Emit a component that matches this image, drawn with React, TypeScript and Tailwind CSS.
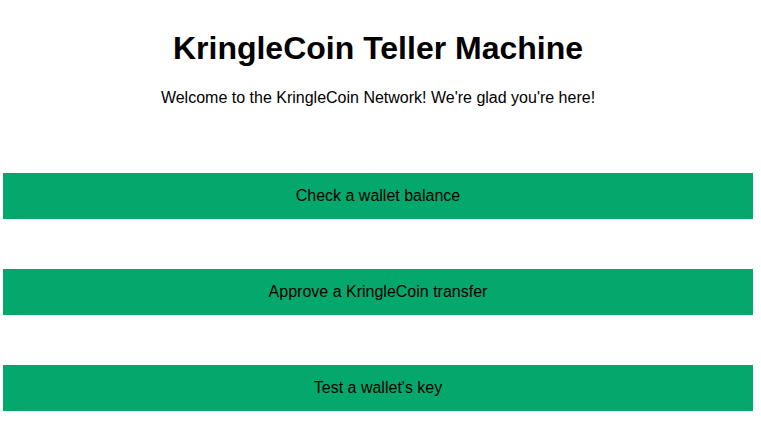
const actions = [
  "Check a wallet balance",
  "Approve a KringleCoin transfer",
  "Test a wallet's key",
];

const App = () => {
  return (
    <div className="w-[761px] h-[422px] bg-white font-['Liberation_Sans',Arial,sans-serif] text-black">
      <div className="ml-[3px] w-[750px] pt-[30px] flex flex-col items-center text-center">
        {/* HEADER */}
        <h1 className="text-[32px] leading-[37px] font-bold">KringleCoin Teller Machine</h1>
        <p className="mt-[22px] text-base leading-[18px]">
          Welcome to the KringleCoin Network! We're glad you're here!
        </p>

        {/* ACTIONS */}
        <div className="mt-[66px] w-full flex flex-col gap-[50px]">
          {actions.map((label) => (
            <button
              key={label}
              className="w-full h-[46px] bg-[#05a86c] text-base text-black flex items-center justify-center"
            >
              {label}
            </button>
          ))}
        </div>
      </div>
    </div>
  );
};

export default App;
